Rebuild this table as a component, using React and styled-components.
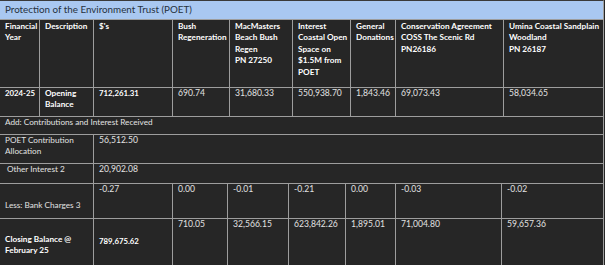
import React from "react";
import styled, { createGlobalStyle } from "styled-components";

const Global = createGlobalStyle`
  html, body { margin: 0; padding: 0; background: #262626; }
  body { font-family: Lato, "Open Sans", sans-serif; }
`;

const Frame = styled.div`
  width: 605px;
  height: 265px;
  overflow: hidden;
  background: #262626;
`;

const Table = styled.div`
  width: 604px;
  display: flex;
  flex-direction: column;
  line-height: 11.4px;
  color: #e4e4e4;
`;

const TitleBar = styled.div`
  height: 19px;
  box-sizing: border-box;
  border-top: 1px solid #3a3a3a;
  border-right: 1px solid #a0a0a0;
  background: #a9c8f1;
  color: #26313d;
  padding: 1px 5px 0;
  font-size: 9.8px;
  line-height: 15px;
`;

const Row = styled.div`
  display: grid;
  grid-template-columns: ${(p) => p.$cols};
  height: ${(p) => p.$h}px;
  box-sizing: border-box;
  border-top: 1px solid #9d9d9d;
`;

const sizeOf = (p) => {
  if (p.$bold) return p.$num ? 7.8 : 8.2;
  return p.$num ? 8.6 : 8.2;
};

const Cell = styled.div`
  box-sizing: border-box;
  border-right: 1px solid #9d9d9d;
  padding: ${(p) => p.$pt ?? 0}px 5px 0 ${(p) => p.$pl ?? 5}px;
  font-size: ${(p) => sizeOf(p)}px;
  font-weight: ${(p) => (p.$bold ? 700 : 400)};
  color: ${(p) => (p.$bold ? "#ffffff" : "#e2e2e2")};
  white-space: nowrap;
  overflow: hidden;
`;

const HeadCell = styled(Cell).attrs({ $bold: true })`
  padding-top: 1px;
`;

const MAIN = "40px 54px 79px 57px 63px 58px 45px 108px 100px";
const LOWER = "94px 79px 55px 61px 57px 50px 106px 102px";

const headers = [
  ["Financial", "Year"],
  ["Description"],
  ["$'s"],
  ["Bush", "Regeneration"],
  ["MacMasters", "Beach Bush", "Regen", "PN 27250"],
  ["Interest", "Coastal Open", "Space on", "$1.5M from", "POET"],
  ["General", "Donations"],
  ["Conservation Agreement", "COSS The Scenic Rd", "PN26186"],
  ["Umina Coastal Sandplain", "Woodland", "PN 26187"],
];

const lines = (arr) =>
  arr.map((t, i) => (
    <React.Fragment key={i}>
      {i > 0 && <br />}
      {t}
    </React.Fragment>
  ));

const opening = ["690.74", "31,680.33", "550,938.70", "1,843.46", "69,073.43", "58,034.65"];
const charges = ["-0.27", "0.00", "-0.01", "-0.21", "0.00", "-0.03", "-0.02"];
const closing = ["710.05", "32,566.15", "623,842.26", "1,895.01", "71,004.80", "59,657.36"];

export default function App() {
  return (
    <Frame>
      <Global />
      <Table>
        <TitleBar>Protection of the Environment Trust (POET)</TitleBar>
        <Row $cols={MAIN} $h={68}>
          {headers.map((h, i) => (
            <HeadCell key={i}>{lines(h)}</HeadCell>
          ))}
        </Row>
        <Row $cols={MAIN} $h={29}>
          <Cell $bold $num>2024-25</Cell>
          <Cell $bold>{lines(["Opening", "Balance"])}</Cell>
          <Cell $bold $num>712,261.31</Cell>
          {opening.map((v, i) => (
            <Cell key={i} $num>{v}</Cell>
          ))}
        </Row>
        <Row $cols="1fr" $h={18}>
          <Cell>Add: Contributions and Interest Received</Cell>
        </Row>
        <Row $cols="94px 1fr" $h={29}>
          <Cell>{lines(["POET Contribution", "Allocation"])}</Cell>
          <Cell $num>56,512.50</Cell>
        </Row>
        <Row $cols="94px 1fr" $h={20}>
          <Cell $pl={7}>Other Interest 2</Cell>
          <Cell $num>20,902.08</Cell>
        </Row>
        <Row $cols={LOWER} $h={35}>
          <Cell $pt={16}>Less: Bank Charges 3</Cell>
          {charges.map((v, i) => (
            <Cell key={i} $num>{v}</Cell>
          ))}
        </Row>
        <Row $cols={LOWER} $h={60}>
          <Cell $bold $pt={15}>{lines(["Closing Balance @", "February 25"])}</Cell>
          <Cell $bold $num $pt={17}>789,675.62</Cell>
          {closing.map((v, i) => (
            <Cell key={i} $num>{v}</Cell>
          ))}
        </Row>
      </Table>
    </Frame>
  );
}
